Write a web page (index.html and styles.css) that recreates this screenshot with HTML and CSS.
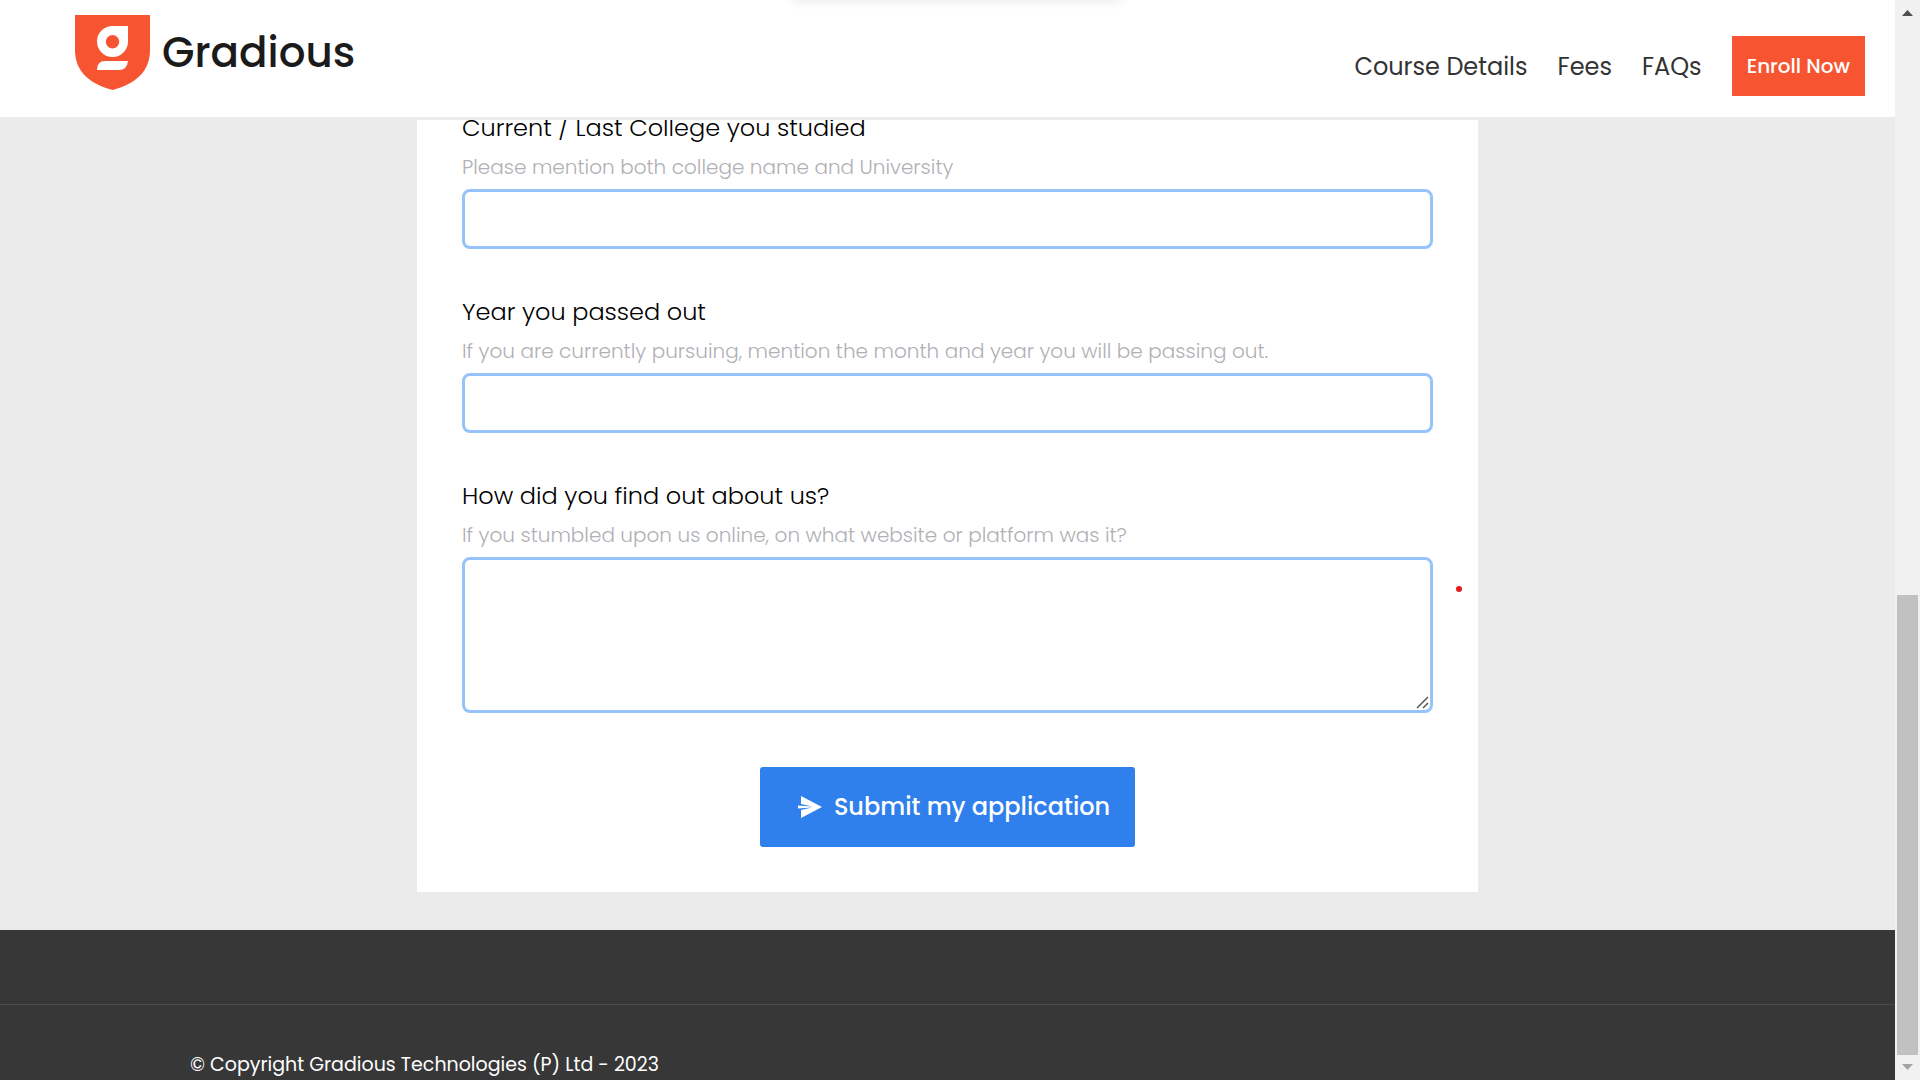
FILE: index.html
```
<!DOCTYPE html>
<html lang="en">
<head>
<meta charset="utf-8">
<meta name="viewport" content="width=device-width, initial-scale=1">
<title>Gradious - Application</title>
<link rel="stylesheet" href="styles.css">
</head>
<body>
<div class="window">
  <div class="page">
    <header class="header">
      <a class="brand" href="#">
        <svg class="brand-mark" viewBox="0 0 75 75" aria-hidden="true">
          <path fill="#f75532" d="M0 0H75V35C75 57 60 69 37.500 75C15 69 0 57 0 35Z"/>
          <path fill="#fff" fill-rule="evenodd" d="M37.500 11H53V26.500A15.500 15.500 0 1 1 37.500 11ZM37.500 20A6.700 6.700 0 1 0 37.500 33.400A6.700 6.700 0 1 0 37.500 20Z"/>
          <path fill="#fff" d="M30 46H53Q52 55 44 55H22Q22 46 30 46Z"/>
        </svg>
        <span class="brand-name">Gradious</span>
      </a>
      <nav class="nav">
        <a class="nav-link" href="#course">Course Details</a>
        <a class="nav-link" href="#fees">Fees</a>
        <a class="nav-link" href="#faqs">FAQs</a>
        <a class="enroll" href="#enroll">Enroll Now</a>
      </nav>
    </header>
    <main class="main">
      <form class="card">
        <div class="field">
          <label class="label" for="college">Current / Last College you studied</label>
          <p class="hint" id="college-hint">Please mention both college name and University</p>
          <input class="control" id="college" type="text" aria-describedby="college-hint">
        </div>
        <div class="field">
          <label class="label" for="year">Year you passed out</label>
          <p class="hint" id="year-hint">If you are currently pursuing, mention the month and year you will be passing out.</p>
          <input class="control" id="year" type="text" aria-describedby="year-hint">
        </div>
        <div class="field">
          <label class="label" for="source">How did you find out about us?</label>
          <p class="hint" id="source-hint">If you stumbled upon us online, on what website or platform was it?</p>
          <div class="control-wrap">
            <textarea class="control control-tall" id="source" aria-describedby="source-hint"></textarea>
            <svg class="grip" viewBox="0 0 13 13" aria-hidden="true"><path d="M1 12 12 1M7 12l5-5" fill="none" stroke="#555" stroke-width="1.500"/></svg>
            <span class="dot"></span>
          </div>
        </div>
        <button class="submit" type="submit">
          <svg class="send" viewBox="0 0 24 22" aria-hidden="true">
            <path fill="#fff" d="M3 0 24 11 3 22V14L14 11.500 0 12.500V9.500L14 10.500 3 8Z"/>
          </svg>
          <span>Submit my application</span>
        </button>
      </form>
    </main>
    <footer class="footer">
      <div class="footer-top"></div>
      <p class="copyright">© Copyright Gradious Technologies (P) Ltd - 2023</p>
    </footer>
    <div class="top-shadow"></div>
  </div>
  <div class="scrollbar" aria-hidden="true">
    <svg class="arrow" viewBox="0 0 25 25"><path fill="#505050" d="M7 16 12.500 10 18 16Z"/></svg>
    <div class="track"><div class="thumb"></div></div>
    <svg class="arrow" viewBox="0 0 25 25"><path fill="#a3a3a3" d="M7 9 12.500 15 18 9Z"/></svg>
  </div>
</div>
</body>
</html>
```
FILE: styles.css
```
* { box-sizing: border-box; }

body {
  margin: 0;
  font-family: Poppins, Inter, sans-serif;
  background: #ebebeb;
}

.window {
  display: grid;
  grid-template-columns: minmax(0, 1fr) 25px;
  height: 100vh;
  overflow: hidden;
}

.page {
  position: relative;
  display: flex;
  flex-direction: column;
  overflow: hidden;
}

.header {
  position: relative;
  z-index: 1;
  flex: none;
  display: flex;
  justify-content: space-between;
  align-items: flex-start;
  padding: 15px 30px 21px 75px;
  background: #fff;
  border-bottom: 3px solid #ebebeb;
}

.brand {
  display: flex;
  align-items: center;
  gap: 12px;
  color: #1b1b1b;
  text-decoration: none;
}

.brand-mark { width: 75px; height: 75px; }

.brand-name {
  font-size: 42px;
  line-height: 60px;
  font-weight: 500;
}

.nav {
  display: flex;
  align-items: center;
  gap: 30px;
  padding-top: 21px;
}

.nav-link {
  padding-top: 2px;
  color: #333;
  font-size: 24px;
  line-height: 36px;
  text-decoration: none;
}

.enroll {
  padding: 12px 15px;
  background: #f75532;
  color: #fff;
  font-size: 20px;
  line-height: 36px;
  font-weight: 500;
  text-decoration: none;
}

/* The form is scrolled partly under the header. */
.main {
  flex: none;
  margin-top: -11px;
  padding: 0 20px 38px;
}

.card {
  display: flex;
  flex-direction: column;
  gap: 44px;
  max-width: 1061px;
  margin: 0 auto;
  padding: 0 45px 45px;
  background: #fff;
}

.field { display: flex; flex-direction: column; }

.label {
  color: #000;
  font-size: 24px;
  line-height: 38px;
  font-weight: 300;
}

.hint {
  margin: 0 0 2px;
  color: #b0b0b5;
  font-size: 20px;
  line-height: 40px;
  font-weight: 300;
}

.control {
  display: block;
  width: 100%;
  height: 60px;
  padding: 8px 16px;
  border: 3px solid #97c3fb;
  border-radius: 8px;
  background: #fff;
  font: inherit;
  font-size: 20px;
}

.control-wrap { position: relative; }

.control-tall { height: 156px; resize: none; }

.grip {
  position: absolute;
  right: 4px;
  bottom: 4px;
  width: 13px;
  height: 13px;
}

.dot {
  position: absolute;
  top: 29px;
  right: -29px;
  width: 6px;
  height: 6px;
  border-radius: 50%;
  background: #e31b1b;
}

.submit {
  display: flex;
  align-items: center;
  align-self: center;
  gap: 12px;
  margin-top: 10px;
  padding: 20px 25px 20px 38px;
  border: 0;
  border-radius: 3px;
  background: #2f80ed;
  color: #fff;
  font: inherit;
  font-size: 24px;
  line-height: 40px;
  font-weight: 500;
}

.send { width: 24px; height: 22px; }

.footer {
  flex: 1 0 auto;
  background: #373738;
  color: #fff;
}

.footer-top { height: 75px; border-bottom: 1px solid #4b4b4c; }

.copyright {
  margin: 0;
  padding: 45px 190px 0;
  font-size: 19px;
  line-height: 30px;
}

.top-shadow {
  position: absolute;
  z-index: 2;
  top: -10px;
  left: calc(50% - 156px);
  width: 330px;
  height: 10px;
  border-radius: 8px;
  box-shadow: 0 0 12px rgba(0, 0, 0, 0.12);
}

.scrollbar {
  display: flex;
  flex-direction: column;
  background: #f1f1f1;
}

.arrow { flex: none; width: 25px; height: 25px; }

.track {
  flex: 1;
  display: flex;
  flex-direction: column;
  justify-content: flex-end;
  padding: 0 2px;
}

.thumb { height: 44.7%; background: #c1c1c1; }
```
